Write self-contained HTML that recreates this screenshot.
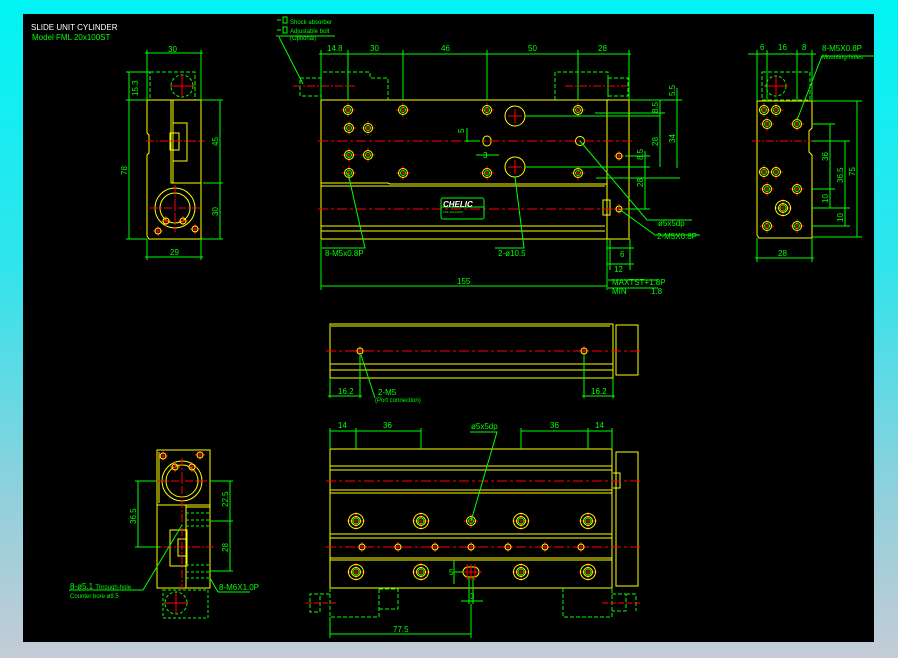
<!DOCTYPE html>
<html><head><meta charset="utf-8"><style>
html,body{margin:0;padding:0}
body{width:898px;height:658px;overflow:hidden;background:linear-gradient(180deg,#00f4f4 0%,#30e4ec 40%,#8fd0dc 75%,#c4ccd6 100%);position:relative}
svg{position:absolute;left:0;top:0}
text{font-family:"Liberation Sans",sans-serif;font-size:8px;fill:#00ff00}
</style></head><body>
<svg width="898" height="658" viewBox="0 0 898 658">
<defs>
<g id="h"><line x1="-7" y1="0" x2="7" y2="0" stroke="#f00"/><line x1="0" y1="-7" x2="0" y2="7" stroke="#f00"/><circle r="4.5" fill="none" stroke="#ff0"/><circle r="2.5" fill="none" stroke="#0f0"/></g>
<g id="hb"><line x1="-9" y1="0" x2="9" y2="0" stroke="#f00"/><line x1="0" y1="-9" x2="0" y2="9" stroke="#f00"/><circle r="7.5" fill="none" stroke="#ff0"/><circle r="4.5" fill="none" stroke="#ff0"/><circle r="3" fill="none" stroke="#0f0"/></g>
<g id="hs"><line x1="-5" y1="0" x2="5" y2="0" stroke="#f00"/><line x1="0" y1="-5" x2="0" y2="5" stroke="#f00"/><circle r="3" fill="none" stroke="#ff0"/></g>
</defs>
<rect x="23" y="14" width="851" height="628" fill="#000"/>
<text x="31" y="30" style="fill:#fff">SLIDE UNIT CYLINDER</text>
<text x="32" y="40">Model  FML 20x100ST</text>

<!-- LEFT VIEW -->
<g fill="none" stroke-width="1">
<rect x="150" y="72" width="45" height="28" stroke="#0f0" stroke-dasharray="4,2"/>
<circle cx="182" cy="86" r="11" stroke="#0f0" stroke-dasharray="3,2"/>
<line x1="170" y1="86" x2="196" y2="86" stroke="#f00"/><line x1="182" y1="75" x2="182" y2="97" stroke="#f00"/>
<path d="M147 100H201V239H149L147 236V155L149 153V135L147 133Z" stroke="#ff0"/>
<path d="M171 100V183H201M173 100V183" stroke="#ff0"/>
<rect x="173" y="123" width="14" height="38" stroke="#ff0"/><rect x="170" y="133" width="9" height="17" stroke="#ff0"/>
<line x1="146" y1="141" x2="205" y2="141" stroke="#f00" stroke-dasharray="8,2,2,2"/>
<circle cx="175" cy="208" r="20" stroke="#ff0"/><circle cx="175" cy="208" r="15" stroke="#ff0"/>
<line x1="150" y1="208" x2="200" y2="208" stroke="#f00" stroke-dasharray="8,2,2,2"/><line x1="175" y1="185" x2="175" y2="232" stroke="#f00" stroke-dasharray="8,2,2,2"/>
<use href="#hs" x="166" y="221"/><use href="#hs" x="183" y="221"/><use href="#hs" x="158" y="231"/><use href="#hs" x="195" y="229"/>
<g stroke="#0f0">
<path d="M147 100V50M201 100V50M145 53H203"/>
<path d="M129 72V239M126 72H150M126 100H147M126 239H147"/>
<path d="M220 100V239M201 100H223M203 183H223M201 239H223"/>
<path d="M147 239V260M201 239V260M145 257H203"/>
</g>
</g>
<text x="168" y="52">30</text>
<text x="138" y="96" transform="rotate(-90 138 96)">15.3</text>
<text x="127" y="175" transform="rotate(-90 127 175)">78</text>
<text x="218" y="146" transform="rotate(-90 218 146)">45</text>
<text x="218" y="216" transform="rotate(-90 218 216)">30</text>
<text x="170" y="255">29</text>

<!-- LEGEND -->
<g fill="none" stroke="#0f0"><path d="M277 20H281M277 30H281"/><rect x="283" y="17" width="4" height="6"/><rect x="283" y="27" width="4" height="6"/><path d="M276 36H335M279 37L303 84"/></g>
<text x="290" y="24" style="font-size:6px">Shock absorber</text>
<text x="290" y="33" style="font-size:6px">Adjustable bolt</text>
<text x="290" y="40" style="font-size:6px">(Optional)</text>

<!-- FRONT VIEW -->
<g fill="none">
<g stroke="#0f0" stroke-dasharray="4,2">
<path d="M321 100V72H370V78H388V100M300 78H321V96H300Z"/>
<path d="M555 100V72H608V100M608 78H628V96H608Z"/>
</g>
<line x1="293" y1="86" x2="355" y2="86" stroke="#f00" stroke-dasharray="8,2,2,2"/>
<line x1="565" y1="86" x2="628" y2="86" stroke="#f00" stroke-dasharray="8,2,2,2"/>
<g stroke="#ff0">
<path d="M321 100H629V239H607M321 100V183H388L390 184H607"/>
<path d="M321 183V239H607V100M321 186H605M321 226H605M321 231H605"/>
<rect x="603" y="200" width="7" height="15"/>
<circle cx="515" cy="116" r="10"/><circle cx="515" cy="167" r="10"/>
<rect x="483" y="136" width="8" height="10" rx="4"/>
<circle cx="580" cy="141" r="4.5"/>
</g>
<line x1="318" y1="141" x2="632" y2="141" stroke="#f00" stroke-dasharray="10,3,3,3"/>
<line x1="318" y1="209" x2="632" y2="209" stroke="#f00" stroke-dasharray="10,3,3,3"/>
<use href="#h" x="348" y="110"/><use href="#h" x="403" y="110"/><use href="#h" x="487" y="110"/><use href="#h" x="578" y="110"/>
<use href="#h" x="349" y="128"/><use href="#h" x="368" y="128"/><use href="#h" x="349" y="155"/><use href="#h" x="368" y="155"/>
<use href="#h" x="349" y="173"/><use href="#h" x="403" y="173"/><use href="#h" x="487" y="173"/><use href="#h" x="578" y="173"/>
<use href="#hs" x="619" y="156"/><use href="#hs" x="619" y="209"/>
<path d="M508 116H522M515 109V123M508 167H522M515 160V174" stroke="#f00"/>
<rect x="441" y="198" width="43" height="21" rx="2" stroke="#0f0"/>
<line x1="441" y1="207" x2="484" y2="207" stroke="#0f0"/>
<g stroke="#0f0">
<path d="M321 100V50M348 100V50M403 100V50M487 100V50M578 100V50M629 100V50M319 54H631"/>
<path d="M467 128V142M465 141H480M476 155H499"/>
<path d="M629 100H682M595 113H665M525 116H660M525 167H650M596 178H680M625 156H650M625 209H650"/>
<path d="M677 88V168M660 100V167M645 151V209"/>
<path d="M321 239V290M607 239V290M321 286H607"/>
<path d="M348 173L365 248H322M515 177L524 248H495"/>
<path d="M580 141L647 220H692M619 209L655 235H700"/>
<path d="M610 239V270M630 239V270M607 248H634M607 264H634M608 280H658M608 288H658"/>
</g>
</g>
<text x="443" y="207" style="fill:#fff;font-style:italic;font-size:8px;font-weight:bold">CHELIC</text>
<text x="443" y="213" style="font-size:3px">FML 20x100ST</text>
<text x="327" y="51">14.8</text><text x="370" y="51">30</text><text x="441" y="51">46</text><text x="528" y="51">50</text><text x="598" y="51">28</text>
<text x="464" y="133" transform="rotate(-90 464 133)">5</text>
<text x="483" y="158">3</text>
<text x="675" y="96" transform="rotate(-90 675 96)">5.5</text>
<text x="658" y="113" transform="rotate(-90 658 113)">8.5</text>
<text x="675" y="143" transform="rotate(-90 675 143)">34</text>
<text x="658" y="146" transform="rotate(-90 658 146)">28</text>
<text x="643" y="160" transform="rotate(-90 643 160)">8.5</text>
<text x="643" y="187" transform="rotate(-90 643 187)">28</text>
<text x="325" y="256">8-M5x0.8P</text>
<text x="498" y="256">2-ø10.5</text>
<text x="658" y="226">ø5x5dp</text>
<text x="657" y="239">2-M5X0.8P</text>
<text x="620" y="257">6</text><text x="614" y="272">12</text>
<text x="457" y="284">155</text>
<text x="612" y="285">MAXTST+1.8P</text>
<text x="612" y="294">MIN</text><text x="651" y="294">1.8</text>

<!-- RIGHT VIEW -->
<g fill="none">
<rect x="762" y="72" width="48" height="28" stroke="#0f0" stroke-dasharray="4,2"/>
<circle cx="776" cy="86" r="10" stroke="#0f0" stroke-dasharray="3,2"/>
<path d="M764 86H788M776 76V96" stroke="#f00"/>
<path d="M757 101H812V128L809 131V152L812 155V238H759L757 235Z" stroke="#ff0"/>
<line x1="752" y1="141" x2="812" y2="141" stroke="#f00" stroke-dasharray="8,2,2,2"/>
<use href="#h" x="764" y="110"/><use href="#h" x="776" y="110"/><use href="#h" x="767" y="124"/><use href="#h" x="797" y="124"/>
<use href="#h" x="764" y="172"/><use href="#h" x="776" y="172"/><use href="#h" x="767" y="189"/><use href="#h" x="797" y="189"/>
<use href="#hb" x="783" y="208"/><use href="#h" x="767" y="226"/><use href="#h" x="797" y="226"/>
<g stroke="#0f0">
<path d="M757 101V50M767 101V50M797 101V50M812 101V50M748 54H816"/>
<path d="M797 120L822 56H875"/>
<path d="M812 101H862M812 124H835M812 141H850M812 189H835M812 208H850M812 226H850M812 237H862"/>
<path d="M857 101V237M845 141V226M830 124V208"/>
<path d="M757 238V262M812 238V262M755 258H814"/>
</g>
</g>
<text x="760" y="50">6</text><text x="778" y="50">16</text><text x="802" y="50">8</text>
<text x="822" y="51">8-M5X0.8P</text>
<text x="822" y="59" style="font-size:6px">Mounting-holes</text>
<text x="828" y="161" transform="rotate(-90 828 161)">36</text>
<text x="843" y="183" transform="rotate(-90 843 183)">36.5</text>
<text x="855" y="176" transform="rotate(-90 855 176)">75</text>
<text x="828" y="203" transform="rotate(-90 828 203)">10</text>
<text x="843" y="222" transform="rotate(-90 843 222)">10</text>
<text x="778" y="256">28</text>

<!-- MIDDLE VIEW -->
<g fill="none">
<path d="M330 324H613V378H330ZM331 326H610M330 364H613M330 370H613" stroke="#ff0"/>
<rect x="616" y="325" width="22" height="50" stroke="#ff0"/>
<line x1="326" y1="351" x2="642" y2="351" stroke="#f00" stroke-dasharray="10,3,3,3"/>
<use href="#hs" x="360" y="351"/><use href="#hs" x="584" y="351"/>
<g stroke="#0f0"><path d="M330 378V398M360 355V398M328 396H362M584 355V398M613 378V398M582 396H615M361 355L375 398"/></g>
</g>
<text x="338" y="394">16.2</text><text x="591" y="394">16.2</text>
<text x="378" y="395">2-M5</text>
<text x="375" y="402" style="font-size:6px">(Port connection)</text>

<!-- BOTTOM VIEW -->
<g fill="none">
<g stroke="#ff0">
<path d="M330 449H612V588H330Z"/>
<path d="M330 466H612M330 470H612M330 490H612M330 493H612M330 534H612M330 538H612M330 558H612M330 560H612"/>
<path d="M616 452H638V586H616ZM613 473H620V488H613"/>
</g>
<line x1="326" y1="481" x2="642" y2="481" stroke="#f00" stroke-dasharray="10,3,3,3"/>
<line x1="326" y1="547" x2="642" y2="547" stroke="#f00" stroke-dasharray="10,3,3,3"/>
<use href="#hb" x="356" y="521"/><use href="#hb" x="421" y="521"/><use href="#h" x="471" y="521"/><use href="#hb" x="521" y="521"/><use href="#hb" x="588" y="521"/>
<use href="#hb" x="356" y="572"/><use href="#hb" x="421" y="572"/><use href="#hb" x="521" y="572"/><use href="#hb" x="588" y="572"/>
<rect x="463" y="567" width="16" height="10" rx="5" stroke="#ff0"/><path d="M460 572H482M467 564V580M471 564V580M475 564V580" stroke="#f00"/>
<use href="#hs" x="362" y="547"/><use href="#hs" x="398" y="547"/><use href="#hs" x="435" y="547"/><use href="#hs" x="471" y="547"/><use href="#hs" x="508" y="547"/><use href="#hs" x="545" y="547"/><use href="#hs" x="581" y="547"/>
<g stroke="#0f0" stroke-dasharray="4,2">
<path d="M330 588V617H379V588M379 589H398V609H379M330 594H320V612H310V594H320"/>
<path d="M563 588V617H612V588M612 594H626V611H612M626 594H636V611"/>
</g>
<path d="M306 603H338M602 603H640" stroke="#f00" stroke-dasharray="6,2"/>
<g stroke="#0f0">
<path d="M330 449V428M356 449V428M421 449V428M521 449V428M588 449V428M612 449V428M330 431H421M521 431H612"/>
<path d="M471 521L497 432H470"/>
<path d="M454 560V584M454 572H463M469 578V604M473 578V604M461 601H483"/>
<path d="M330 617V638M471 604V638M330 634H471"/>
</g>
</g>
<text x="338" y="428">14</text><text x="383" y="428">36</text><text x="471" y="429">ø5x5dp</text><text x="550" y="428">36</text><text x="595" y="428">14</text>
<text x="449" y="575">5</text><text x="470" y="599">3</text>
<text x="393" y="632">77.5</text>

<!-- BOTTOM LEFT VIEW -->
<g fill="none">
<g stroke="#ff0">
<path d="M157 450H210V505H157ZM159 452V503"/>
<path d="M157 505H210V588H157ZM186 505V588M186 507H210"/>
<rect x="170" y="530" width="17" height="36"/><rect x="178" y="539" width="9" height="17"/>
</g>
<circle cx="182" cy="481" r="20" stroke="#ff0"/><circle cx="182" cy="481" r="16" stroke="#ff0"/>
<path d="M157 481H207M182 458V590M150 547H215" stroke="#f00" stroke-dasharray="8,2,2,2"/>
<use href="#hs" x="163" y="456"/><use href="#hs" x="200" y="455"/><use href="#hs" x="175" y="467"/><use href="#hs" x="192" y="467"/>
<g stroke="#0f0" stroke-dasharray="3,2"><path d="M186 513H210M186 520H210M186 526H210M186 565H210M186 572H210M186 578H210"/><rect x="163" y="590" width="45" height="28"/><circle cx="176" cy="603" r="11"/></g>
<path d="M164 603H188M176 592V614" stroke="#f00"/>
<g stroke="#0f0"><path d="M135 481H157M135 547H160M138 481V547M210 481H233M210 521H233M210 571H233M230 481V571M69 590H143L182 525M210 578L218 592H250"/></g>
</g>
<text x="136" y="524" transform="rotate(-90 136 524)">36.5</text>
<text x="228" y="507" transform="rotate(-90 228 507)">22.5</text>
<text x="228" y="552" transform="rotate(-90 228 552)">28</text>
<text x="70" y="589">8-ø5.1  <tspan style="font-size:6px">Through-hole</tspan></text>
<text x="70" y="598" style="font-size:6px">Counter bore  ø9.5</text>
<text x="219" y="590">8-M6X1.0P</text>
</svg>
</body></html>
